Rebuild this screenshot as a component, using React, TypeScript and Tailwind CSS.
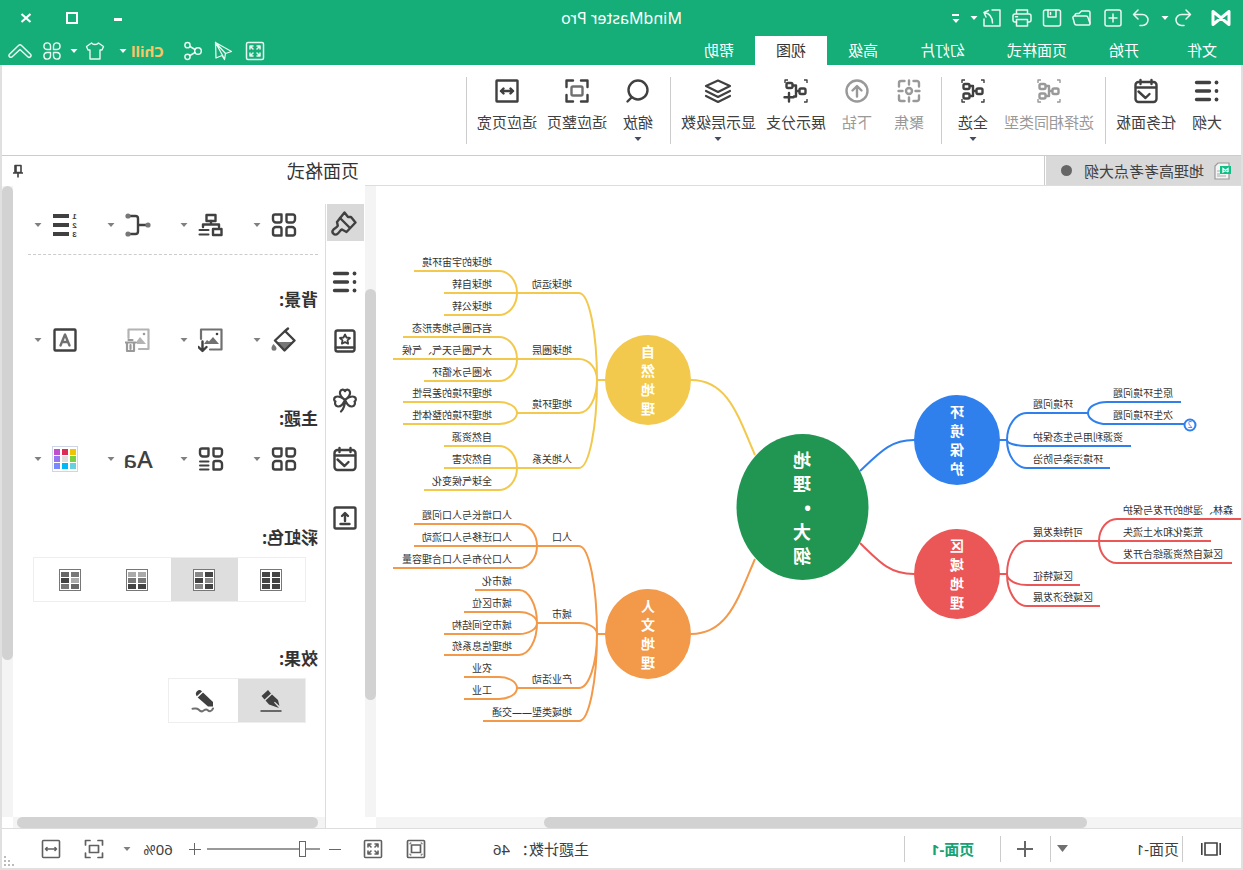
import React, { useState } from 'react';

interface IconProps {
  size?: number;
  stroke?: number;
  className?: string;
  children: React.ReactNode;
}

function Icon({ size = 28, stroke = 2, className = '', children }: IconProps) {
  return (
    <svg
      width={size}
      height={size}
      viewBox={`0 0 ${size} ${size}`}
      fill="none"
      stroke="currentColor"
      strokeWidth={stroke}
      strokeLinecap="round"
      strokeLinejoin="round"
      className={`shrink-0 ${className}`}
      aria-hidden="true"
    >
      {children}
    </svg>
  );
}

function Caret({ className = 'text-[#808080]' }: { className?: string }) {
  return (
    <svg width="8" height="4" viewBox="0 0 8 4" className={`shrink-0 ${className}`} aria-hidden="true">
      <path d="M0.5 0h7L4 4z" fill="currentColor" />
    </svg>
  );
}

/* ---------- Shared glyphs ---------- */

const outlineGlyph = (
  <>
    <path d="M11.5 5.5h13M11.5 14h13M11.5 22.5h13" strokeWidth={3.4} />
    <g fill="currentColor" stroke="none">
      <circle cx="4.5" cy="5.5" r="1.9" />
      <circle cx="4.5" cy="14" r="1.9" />
      <circle cx="4.5" cy="22.5" r="1.9" />
    </g>
  </>
);

const calendarGlyph = (
  <>
    <rect x="3.5" y="5" width="21" height="20" rx="3" />
    <path d="M8.5 3v4M19.5 3v4M4 10.5h20M10.5 17l4 4 7-6.5" />
  </>
);

const nodesGlyph = (
  <>
    <path d="M3 6V3h3M22 3h3v3M25 22v3h-3M6 25H3v-3" strokeWidth={1.4} strokeLinecap="butt" />
    <rect x="4.5" y="11.5" width="6" height="5.5" rx="1.5" />
    <rect x="17.5" y="7" width="6" height="5" rx="1.5" />
    <rect x="17.5" y="16.5" width="6" height="5" rx="1.5" />
    <path d="M11 14h3M17 9h-3v10h3" strokeLinecap="butt" />
  </>
);

const fitPageGlyph = (
  <>
    <path d="M3.5 10V3.5H10M18 3.5h6.5V10M24.5 18v6.5H18M10 24.5H3.5V18" />
    <rect x="8.5" y="9.5" width="11" height="9" rx="1.5" className="opacity-75" />
  </>
);

const fitWidthGlyph = (
  <>
    <rect x="3.5" y="3.5" width="21" height="21" rx="0.5" />
    <path d="M8 14h12M10.5 11.5L8 14l2.5 2.5M17.5 11.5L20 14l-2.5 2.5" />
  </>
);

const petalsGlyph = (
  <>
    <path d="M4 2.5h6.5v6a2 2 0 0 1-2 2H5a3 3 0 0 1-3-3v-3a2 2 0 0 1 2-2z" />
    <path d="M15.5 2.5H22a2 2 0 0 1 2 2v3a3 3 0 0 1-3 3h-3.5a2 2 0 0 1-2-2z" />
    <path d="M5 15h3.5a2 2 0 0 1 2 2v6.5H4a2 2 0 0 1-2-2V18a3 3 0 0 1 3-3z" />
  </>
);

const lastPetal = <path d="M17.5 15H21a3 3 0 0 1 3 3v3.5a2 2 0 0 1-2 2h-6.5V17a2 2 0 0 1 2-2z" />;

const expandArrows = (
  <path d="M5 8V5h3M12 5h3v3M15 12v3h-3M8 15H5v-3M5.5 5.5L8 8M14.5 5.5L12 8M14.5 14.5L12 12M5.5 14.5L8 12" />
);

/* ---------- Title bar ---------- */

function TitleBar() {
  return (
    <div className="relative flex h-9 items-center text-white/90">
      <div className="ml-[11px] mr-[17px] flex">
        <svg width="22" height="20" viewBox="0 0 22 20" aria-label="MindMaster">
          <path
            d="M3 3.5v13L19 3.5v13L3 3.5"
            fill="none"
            stroke="#fff"
            strokeWidth="3"
            strokeLinejoin="round"
            strokeLinecap="round"
          />
        </svg>
      </div>
      <button aria-label="撤销">
        <Icon size={20} stroke={1.5}>
          <path d="M7 2L2.5 6.5 7 11M3 6.5h8.5a5.5 5.5 0 0 1 0 11H9" />
        </Icon>
      </button>
      <Caret className="mx-1 text-white" />
      <button aria-label="重做" className="ml-[6px]">
        <Icon size={20} stroke={1.5}>
          <path d="M13 2l4.5 4.5L13 11M17 6.5H8.5a5.5 5.5 0 0 0 0 11H11" />
        </Icon>
      </button>
      <button aria-label="新建" className="ml-2">
        <Icon size={20} stroke={1.5}>
          <rect x="2" y="2" width="16" height="16" rx="2" />
          <path d="M10 6v8M6 10h8" />
        </Icon>
      </button>
      <button aria-label="打开" className="ml-[11px]">
        <Icon size={20} stroke={1.5}>
          <path d="M2 15V4.5A1.5 1.5 0 0 1 3.5 3h7L13 5.5h2a2 2 0 0 1 2 2" />
          <path d="M4 9.5A2 2 0 0 1 6 8h11.5a1.5 1.5 0 0 1 1.5 2l-1.5 5.5a2 2 0 0 1-2 1.5H3a1.2 1.2 0 0 1-1-1.5z" />
        </Icon>
      </button>
      <button aria-label="保存" className="ml-[10px]">
        <Icon size={20} stroke={1.5}>
          <rect x="1.5" y="2" width="17" height="16" rx="2" />
          <path d="M6 2v7h8V2M11.5 4.5v2" />
        </Icon>
      </button>
      <button aria-label="打印" className="ml-[10px]">
        <Icon size={20} stroke={1.5}>
          <path d="M4.5 6V2h11v4M4.5 14H3a2 2 0 0 1-2-2V8a2 2 0 0 1 2-2h14a2 2 0 0 1 2 2v4a2 2 0 0 1-2 2h-1.5" />
          <path d="M4.5 11.5h11V18h-11zM14.5 8.7h2" />
        </Icon>
      </button>
      <button aria-label="导出" className="ml-[10px]">
        <Icon size={20} stroke={1.5}>
          <path d="M10 2H2v16h16v-7M9.5 15c0-6 3-9.500 8-10.500M13.500 2.500L18 4.500l-2 4.500" />
        </Icon>
      </button>
      <Caret className="ml-1 text-white" />
      <div className="ml-[10px] flex flex-col items-center gap-[3px]">
        <span className="h-[2px] w-[7px] bg-white" />
        <Caret className="text-white" />
      </div>

      <h1 className="pointer-events-none absolute inset-x-0 text-center text-base leading-9 text-white">MindMaster Pro</h1>

      <div className="ml-auto mr-5 flex items-center gap-[34px] text-white">
        <button aria-label="最小化">
          <Icon size={12} stroke={3}>
            <path d="M2 7.5h8" strokeLinecap="butt" />
          </Icon>
        </button>
        <button aria-label="最大化">
          <Icon size={12} stroke={2}>
            <path d="M1 1h10v10H1z" strokeLinejoin="miter" />
          </Icon>
        </button>
        <button aria-label="关闭">
          <Icon size={12} stroke={2.2}>
            <path d="M1.5 2l9 8M10.5 2l-9 8" strokeLinecap="butt" />
          </Icon>
        </button>
      </div>
    </div>
  );
}

const TABS = ['文件', '开始', '页面样式', '幻灯片', '高级', '视图', '帮助'];

function TabBar() {
  const [active, setActive] = useState('视图');
  return (
    <div className="flex h-[29px] items-stretch pl-[5px]">
      <nav className="flex">
        {TABS.map((tab) => (
          <button
            key={tab}
            onClick={() => setActive(tab)}
            className={`px-[21px] text-[15px] leading-[29px] first:mr-[6px] ${
              tab === active ? 'bg-white text-[#333]' : 'text-white'
            }`}
          >
            {tab}
          </button>
        ))}
      </nav>
      <div className="ml-auto mr-2 flex items-center text-white/90">
        <button aria-label="全屏">
          <Icon size={20} stroke={1.5}>
            <rect x="1.5" y="1.5" width="17" height="17" rx="1.5" />
            {expandArrows}
          </Icon>
        </button>
        <button aria-label="发送" className="ml-3">
          <Icon size={20} stroke={1.3}>
            <path d="M17.5 1.5l-16 9 6 2 1 6 2.5-4 6 2.500zM17.500 1.500l-10 11M17.500 1.500L8.500 18" />
          </Icon>
        </button>
        <button aria-label="分享" className="ml-[10px]">
          <Icon size={20} stroke={1.5}>
            <circle cx="5" cy="10" r="3.3" />
            <circle cx="15.5" cy="4.2" r="2.6" />
            <circle cx="15.5" cy="15.8" r="2.6" />
            <path d="M8 8.5l5-3M8 11.5l5 3" />
          </Icon>
        </button>
        <button className="ml-[19px] flex items-center text-[15px] font-bold leading-5 text-[#f6c667]">
          Chill
          <Caret className="ml-1 text-white" />
        </button>
        <button aria-label="皮肤" className="ml-[14px] flex items-center">
          <Icon size={20} stroke={1.4}>
            <path d="M6.5 2c1.500 2 5.500 2 7 0l5 3.500L17 9h-2v9H5V9H3L1.500 5.500z" />
          </Icon>
          <Caret className="ml-[7px] text-white" />
        </button>
        <button aria-label="组件" className="ml-2">
          <Icon size={20} stroke={1.4}>
            <path d="M8.5 8.5H5A3.300 3.300 0 1 1 8.500 5zM11.500 8.500V5A3.300 3.300 0 1 1 15 8.500zM8.500 11.500V15A3.300 3.300 0 1 1 5 11.500zM11.500 11.500H15a3.300 3.300 0 1 1-3.500 3.500z" />
          </Icon>
        </button>
        <button aria-label="收起功能区" className="ml-[10px]">
          <Icon size={24} stroke={1.5}>
            <path d="M1.5 15.3l9-8.800a2.200 2.200 0 0 1 3 0l9 8.800a1.800 1.800 0 0 1-2.700 2.400L12 10.500l-7.800 7.200a1.800 1.800 0 0 1-2.700-2.400z" />
          </Icon>
        </button>
      </div>
    </div>
  );
}

/* ---------- Ribbon ---------- */

interface RibbonButtonProps {
  label: string;
  icon: React.ReactNode;
  disabled?: boolean;
  menu?: boolean;
  stroke?: number;
}

function RibbonButton({ label, icon, disabled, menu, stroke = 2.4 }: RibbonButtonProps) {
  return (
    <button
      disabled={disabled}
      className={`flex min-w-[52px] flex-col items-center px-[5px] ${disabled ? 'text-[#999]' : 'text-[#404040]'}`}
    >
      <Icon stroke={stroke}>{icon}</Icon>
      <span className="mt-[7px] whitespace-nowrap text-[15px] leading-5">{label}</span>
      <span className="mt-[5px] flex h-1">{menu && <Caret className="text-[#454a5e]" />}</span>
    </button>
  );
}

function Divider() {
  return <div className="ml-[5px] mr-[6px] h-[67px] w-px shrink-0 bg-[#ccc]" />;
}

function Ribbon() {
  return (
    <div className="flex items-start border-b border-[#ccc] pb-[11px] pl-2 pt-3">
      <RibbonButton label="大纲" icon={outlineGlyph} />
      <RibbonButton label="任务面板" icon={calendarGlyph} />
      <Divider />
      <RibbonButton label="选择相同类型" icon={nodesGlyph} disabled />
      <RibbonButton label="全选" icon={nodesGlyph} menu />
      <Divider />
      <RibbonButton
        label="聚焦"
        disabled
        stroke={2.4}
        icon={
          <>
            <path d="M4 9.5V6a2 2 0 0 1 2-2h3.5M18.5 4H22a2 2 0 0 1 2 2v3.5M24 18.5V22a2 2 0 0 1-2 2h-3.5M9.5 24H6a2 2 0 0 1-2-2v-3.5" />
            <path d="M14 3.5v4M14 20.5v4M3.5 14h4M20.5 14h4" />
            <circle cx="14" cy="14" r="3" />
          </>
        }
      />
      <RibbonButton
        label="下钻"
        disabled
        icon={
          <>
            <circle cx="14" cy="14" r="10.5" />
            <path d="M14 19.5v-10M9.5 13.5L14 9l4.5 4.5" />
          </>
        }
      />
      <RibbonButton
        label="展示分支"
        icon={
          <>
            <path d="M3 6V3h3M22 3h3v3M6 25H3v-3" strokeWidth={1.4} strokeLinecap="butt" />
            <rect x="4.5" y="11.5" width="6" height="5.5" rx="1.5" />
            <rect x="17.5" y="6" width="6" height="5" rx="1.5" />
            <path d="M11 14h3M17 8.5h-3v11h2M21 16v8.5M16.5 20.3h9" />
          </>
        }
      />
      <RibbonButton
        label="显示层级数"
        menu
        stroke={2.2}
        icon={
          <>
            <path d="M14 3.5L26 9l-12 6L2 9z" />
            <path d="M2 14l12 6 12-6M2 19l12 6 12-6" />
          </>
        }
      />
      <Divider />
      <RibbonButton
        label="缩放"
        menu
        icon={
          <>
            <circle cx="14" cy="13" r="9.5" />
            <path d="M20.5 20.5l4 4" />
          </>
        }
      />
      <RibbonButton label="适应整页" icon={fitPageGlyph} />
      <RibbonButton label="适应页宽" icon={fitWidthGlyph} />
      <Divider />
    </div>
  );
}

/* ---------- Mind map ---------- */

interface Branch {
  text: string;
  y: number;
  end: number;
  childStart?: number;
  children?: Branch[];
}

interface Topic {
  text: string;
  color: string;
  x: number;
  y: number;
  junction: number;
  start: number;
  link: string;
  branches: Branch[];
}

const TOPICS: Topic[] = [
  {
    text: '环境保护',
    color: '#2f80ed',
    x: 284,
    y: 254,
    junction: 234,
    start: 214,
    link: 'M381 285C360 265 350 254 327 254',
    branches: [
      {
        text: '环境问题',
        y: 227,
        end: 153,
        childStart: 134,
        children: [
          { text: '原生环境问题', y: 216, end: 60 },
          { text: '次生环境问题', y: 238, end: 57 },
        ],
      },
      { text: '资源利用与生态保护', y: 260, end: 110 },
      { text: '环境污染与防治', y: 282, end: 131 },
    ],
  },
  {
    text: '区域地理',
    color: '#eb5757',
    x: 284,
    y: 388,
    junction: 234,
    start: 214,
    link: 'M381 357C360 378 350 388 327 388',
    branches: [
      {
        text: '可持续发展',
        y: 355,
        end: 142,
        childStart: 124,
        children: [
          { text: '森林、湿地的开发与保护', y: 333, end: 0 },
          { text: '荒漠化和水土流失', y: 355, end: 30 },
          { text: '区域自然资源综合开发', y: 377, end: 9 },
        ],
      },
      { text: '区域特征', y: 399, end: 161 },
      { text: '区域经济发展', y: 420, end: 141 },
    ],
  },
  {
    text: '自然地理',
    color: '#f2c94c',
    x: 593,
    y: 194,
    junction: 644,
    start: 662,
    link: 'M486 269C503 230 513 194 550 194',
    branches: [
      {
        text: '地球运动',
        y: 107,
        end: 724,
        childStart: 742,
        children: [
          { text: '地球的宇宙环境', y: 85, end: 827 },
          { text: '地球自转', y: 107, end: 797 },
          { text: '地球公转', y: 129, end: 797 },
        ],
      },
      {
        text: '地球圈层',
        y: 173,
        end: 724,
        childStart: 742,
        children: [
          { text: '岩石圈与地表形态', y: 151, end: 838 },
          { text: '大气圈与天气、气候', y: 173, end: 848 },
          { text: '水圈与水循环', y: 195, end: 817 },
        ],
      },
      {
        text: '地理环境',
        y: 227,
        end: 724,
        childStart: 742,
        children: [
          { text: '地理环境的差异性', y: 216, end: 838 },
          { text: '地理环境的整体性', y: 238, end: 838 },
        ],
      },
      {
        text: '人地关系',
        y: 282,
        end: 724,
        childStart: 742,
        children: [
          { text: '自然资源', y: 260, end: 797 },
          { text: '自然灾害', y: 282, end: 797 },
          { text: '全球气候变化', y: 304, end: 817 },
        ],
      },
    ],
  },
  {
    text: '人文地理',
    color: '#f2994a',
    x: 593,
    y: 448,
    junction: 644,
    start: 662,
    link: 'M486 373C503 412 513 448 550 448',
    branches: [
      {
        text: '人口',
        y: 360,
        end: 704,
        childStart: 722,
        children: [
          { text: '人口增长与人口问题', y: 338, end: 827 },
          { text: '人口迁移与人口流动', y: 360, end: 827 },
          { text: '人口分布与人口合理容量', y: 382, end: 848 },
        ],
      },
      {
        text: '城市',
        y: 437,
        end: 704,
        childStart: 722,
        children: [
          { text: '城市化', y: 404, end: 766 },
          { text: '城市区位', y: 426, end: 777 },
          { text: '城市空间结构', y: 448, end: 797 },
          { text: '地理信息系统', y: 469, end: 797 },
        ],
      },
      {
        text: '产业活动',
        y: 502,
        end: 724,
        childStart: 742,
        children: [
          { text: '农业', y: 491, end: 777 },
          { text: '工业', y: 513, end: 777 },
        ],
      },
      { text: '地域类型——交通', y: 535, end: 758 },
    ],
  },
];

// Quarter-ellipse from the junction, then a straight underline
function branchPath(jx: number, jy: number, start: number, y: number, end: number) {
  const dy = y - jy;
  const dx = start - jx;
  return `M${jx} ${jy}C${jx} ${jy + dy * 0.55} ${jx + dx * 0.45} ${y} ${start} ${y}H${end}`;
}

function topicPaths(topic: Topic) {
  const edge = topic.junction > topic.x ? topic.x + 42 : topic.x - 42;
  const paths = [`M${edge} ${topic.y}H${topic.junction}`];
  topic.branches.forEach((b) => {
    paths.push(branchPath(topic.junction, topic.y, topic.start, b.y, b.end));
    b.children?.forEach((c) => paths.push(branchPath(b.end, b.y, b.childStart!, c.y, c.end)));
  });
  return paths.join('');
}

function BranchLabel({ text, start, y, onLeft }: { text: string; start: number; y: number; onLeft: boolean }) {
  return (
    <span
      className={`absolute whitespace-nowrap text-[10px] leading-3 text-[#333] ${onLeft ? '-translate-x-full' : ''}`}
      style={{ left: onLeft ? start - 6 : start + 7, top: y - 15 }}
    >
      {text}
    </span>
  );
}

function MindMap() {
  return (
    <div className="relative flex-1 overflow-hidden bg-white">
      <svg className="absolute left-0 top-0 h-full w-full" fill="none" strokeWidth="2" aria-hidden="true">
        {TOPICS.map((t) => (
          <g key={t.text} stroke={t.color}>
            <path d={t.link} />
            <path d={topicPaths(t)} />
            <ellipse cx={t.x} cy={t.y} rx="43" ry="45" fill={t.color} stroke="none" />
          </g>
        ))}
        <ellipse cx="438.5" cy="321" rx="66" ry="73" fill="#219653" />
        <circle cx="51" cy="239" r="5.5" fill="#fff" stroke="#2f80ed" />
      </svg>

      <span className="absolute left-[45px] top-[233px] w-3 text-center text-[8px] leading-3 text-[#2f80ed]">2</span>
      <div className="absolute left-[430px] top-[262px] w-[18px] whitespace-pre-line text-lg font-bold leading-6 text-white">
        {'地\n理\n•\n大\n纲'}
      </div>

      {TOPICS.map((t) => {
        const onLeft = t.junction < t.x;
        return (
          <React.Fragment key={t.text}>
            <div
              className="absolute w-[14px] -translate-x-1/2 -translate-y-1/2 break-all text-sm font-bold leading-[19px] text-white"
              style={{ left: t.x, top: t.y }}
            >
              {t.text}
            </div>
            {t.branches.map((b) => (
              <React.Fragment key={b.text}>
                <BranchLabel text={b.text} start={t.start} y={b.y} onLeft={onLeft} />
                {b.children?.map((c) => (
                  <BranchLabel key={c.text} text={c.text} start={b.childStart!} y={c.y} onLeft={onLeft} />
                ))}
              </React.Fragment>
            ))}
          </React.Fragment>
        );
      })}
    </div>
  );
}

function DocumentArea() {
  return (
    <section className="flex min-w-0 flex-1 flex-col">
      <div className="flex h-[30px] border-b border-[#ddd]">
        <button className="flex w-[195px] items-center bg-[#d9d9d9] pl-[9px] text-[#404040]">
          <svg width="20" height="18" viewBox="0 0 20 18" aria-hidden="true">
            <path d="M5 1h9l3 3v13H3V1z" fill="#f4f4f4" stroke="#999" strokeWidth="1.2" />
            <path d="M12 9h3M12 12h3M6 14h9" stroke="#aaa" />
            <rect x="1" y="4" width="11" height="8" fill="#0fbf86" />
            <path d="M4 10V6.5L9 10V6.5L4 10" fill="none" stroke="#fff" strokeWidth="1.3" />
          </svg>
          <span className="ml-2 text-[15px] leading-5">地理高考考点大纲</span>
          <span className="ml-3 h-[11px] w-[11px] rounded-full bg-[#666]" />
        </button>
        <span className="ml-px w-px bg-[#ccc]" />
      </div>
      <div className="flex min-h-0 flex-1">
        <div className="flex min-w-0 flex-1 flex-col">
          <MindMap />
          <div className="h-[11px] bg-[#f4f4f4] pl-[154px]">
            <div className="h-full w-[543px] rounded-full bg-[#d2d2d2]" />
          </div>
        </div>
        <div className="mb-[11px] w-[11px] bg-[#f4f4f4] pt-[103px]">
          <div className="h-[411px] rounded-full bg-[#d2d2d2]" />
        </div>
      </div>
    </section>
  );
}

/* ---------- Side panel ---------- */

const STRIP = [
  {
    label: '页面格式',
    icon: (
      <>
        <path d="M14.5 3.5L11 8H8l-4.5 5.5 9 9.5 4.5-2.5c2 .5 2.500 3 4.500 4.300a2.900 2.900 0 0 0 4-4.200c-1-1.500-3.500-2-4.300-3.800l.8-3.800z" />
        <path d="M19 9l-9.5 9.5" />
      </>
    ),
  },
  { label: '大纲', icon: outlineGlyph },
  {
    label: '剪贴画',
    icon: (
      <>
        <rect x="4.5" y="3.5" width="19" height="21" rx="2" />
        <path d="M5 20.5h18" />
        <path
          d="M14 7.500l1.500 3 3.500.5-2.500 2.300.6 3.400-3.100-1.600-3.100 1.600.6-3.400L9 11l3.500-.5z"
          strokeWidth={1.8}
        />
      </>
    ),
  },
  {
    label: '图标',
    icon: (
      <path
        d="M14 14C10 11 8.500 8.500 9 6c.7-3 4-3 5-.8 1-2.200 4.300-2.200 5 .8.500 2.500-1 5-5 8zc4-3 7-4.500 9.500-3 2.200 1.500 1.500 4 0 4.500 1 1.500.5 4.500-2.500 5-2.500.2-5-2-7-6.500zc-4-3-7-4.500-9.500-3-2.200 1.500-1.500 4 0 4.500-1 1.500-.5 4.500 2.500 5 2.500.2 5-2 7-6.500zc0 5 1.500 9 4 11.500"
        strokeWidth={2.2}
      />
    ),
  },
  { label: '任务', icon: calendarGlyph },
  {
    label: '导出',
    icon: (
      <>
        <rect x="3.5" y="3.5" width="21" height="21" rx="1.5" />
        <path d="M14 17V9.5M11 12l3-3 3 3M9.5 20h9" />
      </>
    ),
  },
];

function Swatches({ colors }: { colors: string[] }) {
  return (
    <svg width="24" height="24" viewBox="0 0 24 24" aria-hidden="true">
      <rect x="1.5" y="1.5" width="21" height="21" fill="#fff" stroke="#777" />
      {colors.map((c, i) => (
        <rect key={i} x={3 + (i % 2) * 10} y={4 + Math.floor(i / 2) * 6} width="8" height="5" fill={c} />
      ))}
    </svg>
  );
}

const PALETTE = ['#f0c400', '#dc2b55', '#c04fd0', '#7bd040', '#dedede', '#9575f0', '#66cfe0', '#00b8f5', '#7a87ff'];

const RAINBOWS = [
  { label: '单色', colors: ['#444', '#444', '#444', '#444', '#444', '#444'] },
  { label: '交替', colors: ['#444', '#888', '#888', '#444', '#444', '#888'] },
  { label: '渐变', colors: ['#aaa', '#aaa', '#777', '#777', '#444', '#444'] },
  { label: '随机', colors: ['#777', '#666', '#aaa', '#444', '#666', '#777'] },
];

interface ToolProps {
  label: string;
  children: React.ReactNode;
  menu?: boolean;
  disabled?: boolean;
}

function Tool({ label, children, menu = true, disabled }: ToolProps) {
  return (
    <button
      aria-label={label}
      disabled={disabled}
      className={`flex h-7 w-[73px] items-center pl-5 ${disabled ? 'text-[#999]' : 'text-[#404040]'}`}
    >
      <span className="flex w-7 justify-center">{children}</span>
      {menu && <Caret className="ml-[9px] text-[#808080]" />}
    </button>
  );
}

function SectionTitle({ children }: { children: React.ReactNode }) {
  return <h3 className="text-[17px] font-bold leading-6 text-[#333]">{children}</h3>;
}

function FormatPanel() {
  const [rainbow, setRainbow] = useState(1);
  const [effect, setEffect] = useState(0);

  return (
    <div className="min-h-0 flex-1 overflow-hidden pl-[7px] pt-[25px]">
      <div className="flex">
        <Tool label="布局">
          <Icon size={26} stroke={2.4}>
            {petalsGlyph}
            {lastPetal}
          </Icon>
        </Tool>
        <Tool label="结构">
          <Icon size={26} stroke={2.4}>
            <rect x="8.5" y="3" width="9" height="6" />
            <path d="M13 9v3.5M5 15v-2.5h16V15" />
            <rect x="2.5" y="17" width="8.5" height="6" />
            <path d="M15.5 18h9M15.5 22.5h9" strokeWidth={2} />
          </Icon>
        </Tool>
        <Tool label="连接线">
          <Icon size={26} stroke={2.4}>
            <path d="M5 13h8M21 4h-5.5A2.500 2.500 0 0 0 13 6.500v13a2.500 2.500 0 0 0 2.500 2.500H21" />
            <g fill="#777" stroke="none">
              <circle cx="3" cy="13" r="2.6" />
              <circle cx="23" cy="4" r="2.6" />
              <circle cx="23" cy="22" r="2.6" />
            </g>
          </Icon>
        </Tool>
        <Tool label="编号">
          <span className="flex items-center gap-[3px]">
            <span className="flex flex-col font-['Liberation_Sans',sans-serif] text-[8px] font-bold leading-[9px]">
              <span>1</span>
              <span>2</span>
              <span>3</span>
            </span>
            <svg width="16" height="26" viewBox="0 0 16 26" stroke="currentColor" strokeWidth="4" aria-hidden="true">
              <path d="M0 4h16M0 13h16M0 22h16" />
            </svg>
          </span>
        </Tool>
      </div>
      <div className="mr-[15px] mt-[15px] border-t border-dashed border-[#ccc]" />

      <div className="mt-[33px]">
        <SectionTitle>背景:</SectionTitle>
      </div>
      <div className="mt-[14px] flex">
        <Tool label="背景颜色">
          <Icon size={26} stroke={2.4}>
            <path d="M4 15h17l-8.5 8z" fill="#777" stroke="none" />
            <path d="M9 1.5l3.5 3M12 4l10 9.5-9.5 10-10-10z" />
            <path
              d="M23.5 17c1.500 2 2 3 2 4.200a2.500 2.500 0 0 1-5 0c0-1.500 1.500-2.200 3-4.200z"
              fill="#777"
              stroke="none"
            />
          </Icon>
        </Tool>
        <Tool label="背景图片">
          <Icon size={26} stroke={2.2}>
            <path d="M14 22.5H2.500v-20H23V12" className="opacity-75" />
            <path d="M5 17l6-7 4 4.500 2-1.500 3 4z" fill="currentColor" stroke="none" className="opacity-75" />
            <circle cx="7" cy="7" r="1.3" fill="currentColor" stroke="none" />
            <path d="M21.5 14.500v9M17.500 20l4 4 4-4" strokeWidth={2.4} />
          </Icon>
        </Tool>
        <Tool label="删除背景图片" menu={false} disabled>
          <Icon size={26} stroke={2.2}>
            <path d="M12 22H2.5V2.500h20V11" className="opacity-75" />
            <path d="M5 17l6-7 3 4v3z" fill="currentColor" stroke="none" className="opacity-75" />
            <circle cx="7" cy="7" r="1.3" fill="currentColor" stroke="none" />
            <path d="M15 15.500h11M18.500 13h4M17 15.500V24h7v-8.500M20.500 18v4" />
          </Icon>
        </Tool>
        <Tool label="水印">
          <Icon size={26} stroke={2.4}>
            <rect x="2.5" y="2.5" width="21" height="21" rx="1" />
            <path d="M8.5 18.5L13 7.500l4.500 11M10 15h6" className="opacity-75" />
          </Icon>
        </Tool>
      </div>

      <div className="mt-[53px]">
        <SectionTitle>主题:</SectionTitle>
      </div>
      <div className="mt-[14px] flex">
        <Tool label="主题样式">
          <Icon size={26} stroke={2.4}>
            {petalsGlyph}
            {lastPetal}
          </Icon>
        </Tool>
        <Tool label="主题列表">
          <Icon size={26} stroke={2.4}>
            {petalsGlyph}
            <path d="M15.5 15.5H24M15.5 19.5H24M15.5 23.5H24" strokeWidth={2} />
          </Icon>
        </Tool>
        <Tool label="主题字体">
          <span className="text-2xl font-medium leading-7">Aa</span>
        </Tool>
        <Tool label="主题颜色">
          <svg width="26" height="26" viewBox="0 0 26 26" aria-hidden="true">
            <rect x="0.5" y="0.5" width="25" height="25" fill="#fff" stroke="#cdd5e6" />
            {PALETTE.map((c, i) => (
              <rect key={c} x={2 + (i % 3) * 8} y={3 + Math.floor(i / 3) * 7} width="6" height="6" fill={c} />
            ))}
          </svg>
        </Tool>
      </div>

      <div className="mt-[53px]">
        <SectionTitle>彩虹色:</SectionTitle>
      </div>
      <div className="ml-3 mt-[7px] flex h-[45px] w-[273px] border border-[#eee]">
        {RAINBOWS.map((r, i) => (
          <button
            key={r.label}
            aria-label={r.label}
            onClick={() => setRainbow(i)}
            className={`flex w-[67px] items-center justify-center ${i === rainbow ? 'bg-[#dedede]' : ''}`}
          >
            <Swatches colors={r.colors} />
          </button>
        ))}
      </div>

      <div className="mt-[45px]">
        <SectionTitle>效果:</SectionTitle>
      </div>
      <div className="ml-3 mt-[7px] flex h-[45px] w-[138px] border border-[#eee] text-[#404040]">
        <button
          aria-label="平滑"
          onClick={() => setEffect(0)}
          className={`flex w-[67px] items-center justify-center ${effect === 0 ? 'bg-[#dedede]' : ''}`}
        >
          {/* nib points down-left, straight stroke below */}
          <Icon size={24}>
            <g fill="currentColor" stroke="none">
              <path d="M15 1l6.5 6-3 3.500-6.500-6z" />
              <path d="M11 5.500l6.500 6-3.500 4L4 19l5-5.500-.8-.8L3.500 17 5 11z" />
            </g>
            <path d="M1.5 22h21" className="opacity-75" strokeLinecap="butt" />
          </Icon>
        </button>
        <button
          aria-label="手绘"
          onClick={() => setEffect(1)}
          className={`flex w-[69px] items-center justify-center ${effect === 1 ? 'bg-[#dedede]' : ''}`}
        >
          <Icon size={24}>
            <g fill="currentColor" stroke="none">
              <path d="M13 2.500a3.500 3.500 0 0 1 5-.2 3.800 3.800 0 0 1 .2 5z" />
              <path d="M12 3.500l5.300 5L7 17.500H2V13z" />
            </g>
            <path d="M2 19.5c2 4 4 3 5.500 1.500s3 0 4.500 1 3 0 4.500-1.500 3-.8 6-.8" className="opacity-75" />
          </Icon>
        </button>
      </div>
    </div>
  );
}

function SidePanel() {
  const [active, setActive] = useState(0);
  return (
    <aside className="flex w-[363px] shrink-0 flex-col">
      <div className="flex h-[30px] items-center justify-between pl-[6px] pr-[9px]">
        <h2 className="text-lg leading-7 text-[#333]">页面格式</h2>
        <button aria-label="固定面板" className="text-[#404040]">
          <Icon size={14} stroke={1.6}>
            <path d="M4 1.500h6v7H4zM2 9h10M7 9v4.500M9 2v6" strokeLinecap="butt" />
          </Icon>
        </button>
      </div>
      <div className="flex min-h-0 flex-1">
        <div className="mt-[18px] flex w-10 flex-col gap-[22px] border-r border-[#ddd] pl-px text-[#404040]">
          {STRIP.map((s, i) => (
            <button
              key={s.label}
              aria-label={s.label}
              onClick={() => setActive(i)}
              className={`flex h-[37px] w-[37px] items-center justify-center ${i === active ? 'bg-[#d9d9d9]' : ''}`}
            >
              <Icon stroke={2.4}>{s.icon}</Icon>
            </button>
          ))}
        </div>
        <div className="flex min-w-0 flex-1 flex-col">
          <FormatPanel />
          <div className="h-[11px] bg-[#f4f4f4] pl-[7px] pr-1">
            <div className="h-full rounded-full bg-[#d2d2d2]" />
          </div>
        </div>
        <div className="mb-[11px] w-[11px] bg-[#f4f4f4]">
          <div className="h-[474px] rounded-full bg-[#d2d2d2]" />
        </div>
      </div>
    </aside>
  );
}

/* ---------- Status bar ---------- */

function StatusBar() {
  const [zoom, setZoom] = useState(13);
  return (
    <footer className="flex h-10 items-center border-t border-[#ddd] text-[15px] leading-5 text-[#404040]">
      <button aria-label="页面列表" className="ml-5">
        <Icon size={20} stroke={1.6}>
          <path d="M4 4h12v12H4z" strokeLinejoin="miter" />
          <path d="M0.8 4v12M19.2 4v12" strokeLinecap="butt" />
        </Icon>
      </button>
      <span className="ml-[18px] h-[26px] w-px bg-[#ccc]" />
      <button className="flex w-[131px] items-center justify-between pl-[3px] pr-[6px]">
        页面-1
        <svg width="11" height="7" viewBox="0 0 11 7" aria-hidden="true">
          <path d="M0 0h11L5.5 7z" fill="#707070" />
        </svg>
      </button>
      <span className="h-[26px] w-px bg-[#ccc]" />
      <button aria-label="新建页面" className="flex w-[49px] justify-center text-[#666]">
        <Icon size={16} stroke={2}>
          <path d="M8 0v16M0 8h16" strokeLinecap="butt" />
        </Icon>
      </button>
      <span className="h-[26px] w-px bg-[#ccc]" />
      <button className="w-[95px] text-center font-bold text-[#15a374]">页面-1</button>
      <span className="h-[26px] w-px bg-[#ccc]" />

      <span className="ml-auto w-[163px] whitespace-pre">主题计数： 46</span>
      <button aria-label="全屏预览" className="text-[#606060]">
        <Icon size={20} stroke={1.7}>
          <rect x="1.5" y="1.5" width="17" height="17" rx="1" />
          <rect x="5.5" y="6" width="9" height="7.5" />
          <path d="M4 5V4h1M15 4h1v1M16 15v1h-1M5 16H4v-1" strokeWidth={1} />
        </Icon>
      </button>
      <button aria-label="全屏" className="ml-[23px] text-[#606060]">
        <Icon size={20} stroke={1.6}>
          <rect x="1.5" y="1.5" width="17" height="17" rx="1" />
          {expandArrows}
        </Icon>
      </button>
      <button aria-label="缩小" className="ml-[22px] text-[#666]">
        <Icon size={12} stroke={1}>
          <path d="M0 6.5h12" />
        </Icon>
      </button>
      <input
        type="range"
        aria-label="缩放比例"
        min={0}
        max={100}
        value={zoom}
        onChange={(e) => setZoom(Number(e.target.value))}
        className="ml-[9px] h-4 w-[113px] appearance-none bg-transparent [&::-webkit-slider-runnable-track]:h-[2px] [&::-webkit-slider-runnable-track]:bg-[#999] [&::-webkit-slider-thumb]:-mt-[7px] [&::-webkit-slider-thumb]:h-4 [&::-webkit-slider-thumb]:w-[7px] [&::-webkit-slider-thumb]:appearance-none [&::-webkit-slider-thumb]:border [&::-webkit-slider-thumb]:border-[#666] [&::-webkit-slider-thumb]:bg-white"
      />
      <button aria-label="放大" className="ml-[6px] text-[#666]">
        <Icon size={12} stroke={1}>
          <path d="M0 6.5h12M6.5 0v12" />
        </Icon>
      </button>
      <button className="ml-[15px] flex items-center">
        <span className="w-8">60%</span>
        <Caret className="ml-[11px] text-[#808080]" />
      </button>
      <button aria-label="适应整页" className="ml-[19px] text-[#606060]">
        <Icon size={20} stroke={1.7}>
          <path d="M1.5 6V1.500H6M14 1.500h4.500V6M18.500 14v4.500H14M6 18.500H1.500V14" />
          <rect x="5.5" y="6.5" width="9" height="7" />
        </Icon>
      </button>
      <button aria-label="适应页宽" className="ml-[23px] text-[#606060]">
        <Icon size={20} stroke={1.6}>
          <rect x="1.5" y="1.5" width="17" height="17" rx="1" />
          <path d="M4.5 10h11M6 8.500L4.500 10 6 11.500M14 8.500l1.500 1.500-1.500 1.500" />
        </Icon>
      </button>
      <svg
        width="10"
        height="10"
        viewBox="0 0 10 10"
        fill="#bbb"
        className="mb-[2px] ml-[27px] mr-[2px] self-end"
        aria-hidden="true"
      >
        <path d="M0 8h2v2H0zM4 8h2v2H4zM8 8h2v2H8zM4 4h2v2H4zM8 4h2v2H8zM8 0h2v2H8z" />
      </svg>
    </footer>
  );
}

export default function App() {
  return (
    <div
      lang="zh-CN"
      className="flex h-screen min-w-[1200px] -scale-x-100 flex-col overflow-hidden bg-white font-['Noto_Sans','Noto_Sans_CJK_SC',sans-serif]"
    >
      <header className="bg-[#15ae78]">
        <TitleBar />
        <TabBar />
      </header>
      <div className="flex min-h-0 flex-1 flex-col border-x-2 border-b-2 border-[#e0e0e0]">
        <Ribbon />
        <main className="flex min-h-0 flex-1">
          <DocumentArea />
          <SidePanel />
        </main>
        <StatusBar />
      </div>
    </div>
  );
}
